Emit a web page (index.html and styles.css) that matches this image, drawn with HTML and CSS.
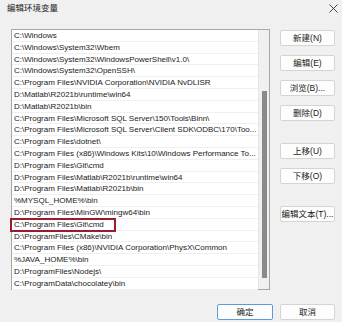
FILE: index.html
```html
<!DOCTYPE html>
<html lang="zh-CN">
<head>
  <meta charset="UTF-8" />
  <title>编辑环境变量</title>
  <link rel="stylesheet" href="styles.css">
</head>
<body>

  <div class="dialog">
    <!-- Title bar -->
    <div class="titlebar">
      <span class="title">编辑环境变量</span>
      <svg class="close" width="9" height="9" viewBox="0 0 9 9">
        <path d="M0.5 0.5 L8.5 8.5 M8.5 0.5 L0.5 8.5" stroke="#333" stroke-width="0.9" fill="none" />
      </svg>
    </div>

    <div class="main">
      <!-- Path list -->
      <div class="list">
        <div class="rows">
          <div class="row">C:\Windows</div>
          <div class="row">C:\Windows\System32\Wbem</div>
          <div class="row">C:\Windows\System32\WindowsPowerShell\v1.0\</div>
          <div class="row">C:\Windows\System32\OpenSSH\</div>
          <div class="row">C:\Program Files\NVIDIA Corporation\NVIDIA NvDLISR</div>
          <div class="row">D:\Matlab\R2021b\runtime\win64</div>
          <div class="row">D:\Matlab\R2021b\bin</div>
          <div class="row">C:\Program Files\Microsoft SQL Server\150\Tools\Binn\</div>
          <div class="row">C:\Program Files\Microsoft SQL Server\Client SDK\ODBC\170\Too...</div>
          <div class="row">C:\Program Files\dotnet\</div>
          <div class="row">C:\Program Files (x86)\Windows Kits\10\Windows Performance To...</div>
          <div class="row">D:\Program Files\Git\cmd</div>
          <div class="row">D:\Program Files\Matlab\R2021b\runtime\win64</div>
          <div class="row">D:\Program Files\Matlab\R2021b\bin</div>
          <div class="row">%MYSQL_HOME%\bin</div>
          <div class="row">D:\Program Files\MinGW\mingw64\bin</div>
          <div class="row marked"><span class="mark">C:\Program Files\Git\cmd</span></div>
          <div class="row">D:\ProgramFiles\CMake\bin</div>
          <div class="row">C:\Program Files (x86)\NVIDIA Corporation\PhysX\Common</div>
          <div class="row">%JAVA_HOME%\bin</div>
          <div class="row">D:\ProgramFiles\Nodejs\</div>
          <div class="row">C:\ProgramData\chocolatey\bin</div>
        </div>
        <div class="scrollbar">
          <div class="thumb"></div>
        </div>
      </div>

      <!-- Side buttons -->
      <div class="side">
        <div class="group">
          <button class="btn">新建(N)</button>
          <button class="btn">编辑(E)</button>
          <button class="btn">浏览(B)...</button>
          <button class="btn">删除(D)</button>
        </div>
        <div class="group">
          <button class="btn">上移(U)</button>
          <button class="btn">下移(O)</button>
        </div>
        <div class="group">
          <button class="btn">编辑文本(T)...</button>
        </div>
      </div>
    </div>

    <!-- Footer -->
    <div class="footer">
      <button class="btn default">确定</button>
      <button class="btn">取消</button>
    </div>
  </div>

</body>
</html>
```

FILE: styles.css
```css
* {
  box-sizing: border-box;
}
body {
  margin: 0;
  padding: 0;
  font-family: 'Liberation Sans', 'Noto Sans CJK SC', sans-serif;
  font-size: 8px;
  color: #1a1a1a;
}

.dialog {
  width: 342px;
  height: 322px;
  background: #f0f0f0;
  display: flex;
  flex-direction: column;
}

.titlebar {
  height: 29px;
  display: flex;
  align-items: flex-start;
  justify-content: space-between;
  padding: 2px 4px 0 7px;
}

.title {
  font-size: 8.5px;
  line-height: 12px;
  color: #222;
}

.close {
  margin-top: 2px;
}

.main {
  display: flex;
  padding-left: 11px;
  gap: 10px;
}

/* List */
.list {
  width: 259px;
  height: 261px;
  background: #fff;
  border: 1px solid #a8a8a8;
  display: flex;
}

.rows {
  flex: 1;
  min-width: 0;
}

.row {
  height: 11.8px;
  line-height: 11px;
  padding-left: 2px;
  border-bottom: 1px solid #f0f0f0;
  white-space: nowrap;
  overflow: hidden;
}

.row.marked {
  overflow: visible;
}

.mark {
  position: relative;
}

/* red outline around the highlighted entry */
.mark::before {
  content: '';
  position: absolute;
  left: -4px;
  right: -12px;
  top: -2px;
  bottom: -3px;
  border: 2px solid #9c1a2f;
}

.scrollbar {
  width: 11px;
  background: #f0f0f0;
  border-left: 1px solid #e6e6e6;
  padding: 61px 2px 10px 3px;
}

.thumb {
  width: 5px;
  height: 187px;
  background: #8a8a8a;
}

/* Buttons */
.side {
  padding-top: 1px;
  display: flex;
  flex-direction: column;
  gap: 22px;
}

.group {
  display: flex;
  flex-direction: column;
  gap: 9px;
}

.btn {
  width: 55px;
  height: 16px;
  padding: 0;
  background: #fdfdfd;
  border: 1px solid #d4d4d4;
  border-radius: 2px;
  font-family: inherit;
  font-size: 8.5px;
  color: #1a1a1a;
  line-height: 14px;
  white-space: nowrap;
}

.footer {
  margin-top: 14px;
  display: flex;
  justify-content: flex-end;
  gap: 7px;
  padding-right: 7px;
}

.btn.default {
  width: 56px;
  border-color: #5e9bd6;
}
```
